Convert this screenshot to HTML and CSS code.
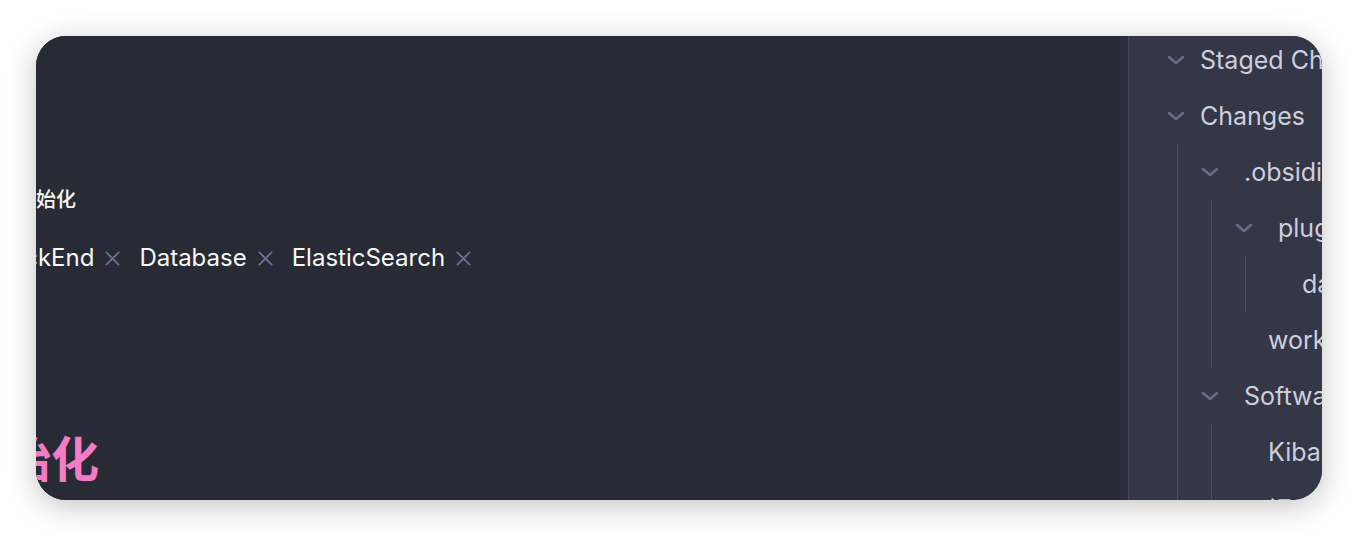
FILE: index.html
```html
<!DOCTYPE html>
<html lang="zh">
<head>
<meta charset="utf-8">
<link rel="stylesheet" href="styles.css">
</head>
<body>
<div class="stage">
  <div class="window">
    <main class="editor">
      <div class="content">
        <div class="prop-line">初始化</div>
        <div class="tags">
          <span class="tag">BackEnd<svg class="x" viewBox="0 0 18 18"><path d="M2 2L16 16M16 2L2 16"/></svg></span>
          <span class="tag">Database<svg class="x" viewBox="0 0 18 18"><path d="M2 2L16 16M16 2L2 16"/></svg></span>
          <span class="tag">ElasticSearch<svg class="x" viewBox="0 0 18 18"><path d="M2 2L16 16M16 2L2 16"/></svg></span>
        </div>
        <h1 class="heading">初始化</h1>
      </div>
    </main>
    <div class="splitter"></div>
    <aside class="panel">
      <div class="tree">
        <div class="row l0"><svg class="chev" viewBox="0 0 18 10"><path d="M2 2L9 8L16 2"/></svg><span class="label">Staged Changes</span></div>
        <div class="row l0"><svg class="chev" viewBox="0 0 18 10"><path d="M2 2L9 8L16 2"/></svg><span class="label">Changes</span></div>
        <div class="kids k0">
          <div class="row folder"><svg class="chev" viewBox="0 0 18 10"><path d="M2 2L9 8L16 2"/></svg><span class="label">.obsidian</span></div>
          <div class="kids">
            <div class="row folder"><svg class="chev" viewBox="0 0 18 10"><path d="M2 2L9 8L16 2"/></svg><span class="label">plugins</span></div>
            <div class="kids">
              <div class="row file"><span class="label">data.json</span></div>
            </div>
            <div class="row file"><span class="label">workspace.json</span></div>
          </div>
          <div class="row folder"><svg class="chev" viewBox="0 0 18 10"><path d="M2 2L9 8L16 2"/></svg><span class="label">Software</span></div>
          <div class="kids">
            <div class="row file"><span class="label">Kibana.md</span></div>
            <div class="row file"><span class="label">记录.md</span></div>
          </div>
        </div>
      </div>
    </aside>
  </div>
</div>
</body>
</html>
```

FILE: styles.css
```css
* { box-sizing: border-box; }
html, body { margin: 0; padding: 0; background: #ffffff; }
body {
  width: 1358px;
  height: 536px;
  overflow: hidden;
  font-family: Inter, "Noto Sans CJK SC", sans-serif;
}
.stage {
  padding: 36px;
}
.window {
  width: 1286px;
  height: 464px;
  border-radius: 30px;
  overflow: hidden;
  display: flex;
  background: #282a36;
  box-shadow: 0 6px 30px rgba(0, 0, 0, 0.24);
}
.editor {
  width: 1084px;
  flex: none;
  background: #282a36;
  overflow: hidden;
}
.content {
  padding-top: 150px;
  color: #f8f8f2;
}
.prop-line {
  font-size: 20px;
  line-height: 28px;
  font-weight: 500;
  margin-left: -20px;
  white-space: nowrap;
}
.tags {
  margin-top: 28px;
  margin-left: -41px;
  display: flex;
  gap: 18px;
  font-size: 24px;
  line-height: 32px;
  white-space: nowrap;
}
.tag {
  display: flex;
  align-items: center;
  gap: 10px;
}
.x {
  width: 17px;
  height: 17px;
  fill: none;
  stroke: #6c6f93;
  stroke-width: 2;
}
.heading {
  margin: 158px 0 0 -81px;
  font-size: 48px;
  line-height: 56px;
  font-weight: 600;
  color: #f47cc4;
  white-space: nowrap;
}
.splitter {
  width: 9px;
  flex: none;
  background: #2c2e3b;
  border-right: 1px solid #44475a;
}
.panel {
  flex: 1;
  background: #343746;
  overflow: hidden;
}
.tree {
  margin-top: -4px;
  color: #cdcede;
  font-size: 25px;
}
.row {
  height: 56px;
  display: flex;
  align-items: center;
  white-space: nowrap;
}
.chev {
  width: 18px;
  height: 10px;
  flex: none;
  fill: none;
  stroke: #686b8e;
  stroke-width: 2.5;
  stroke-linecap: round;
  stroke-linejoin: round;
}
.l0 { padding-left: 38px; gap: 15px; }
.folder { padding-left: 23px; gap: 25px; }
.file { padding-left: 56px; }
.kids {
  margin-left: 33px;
  border-left: 1px solid #4a4d62;
}
.kids.k0 { margin-left: 48px; }
```
